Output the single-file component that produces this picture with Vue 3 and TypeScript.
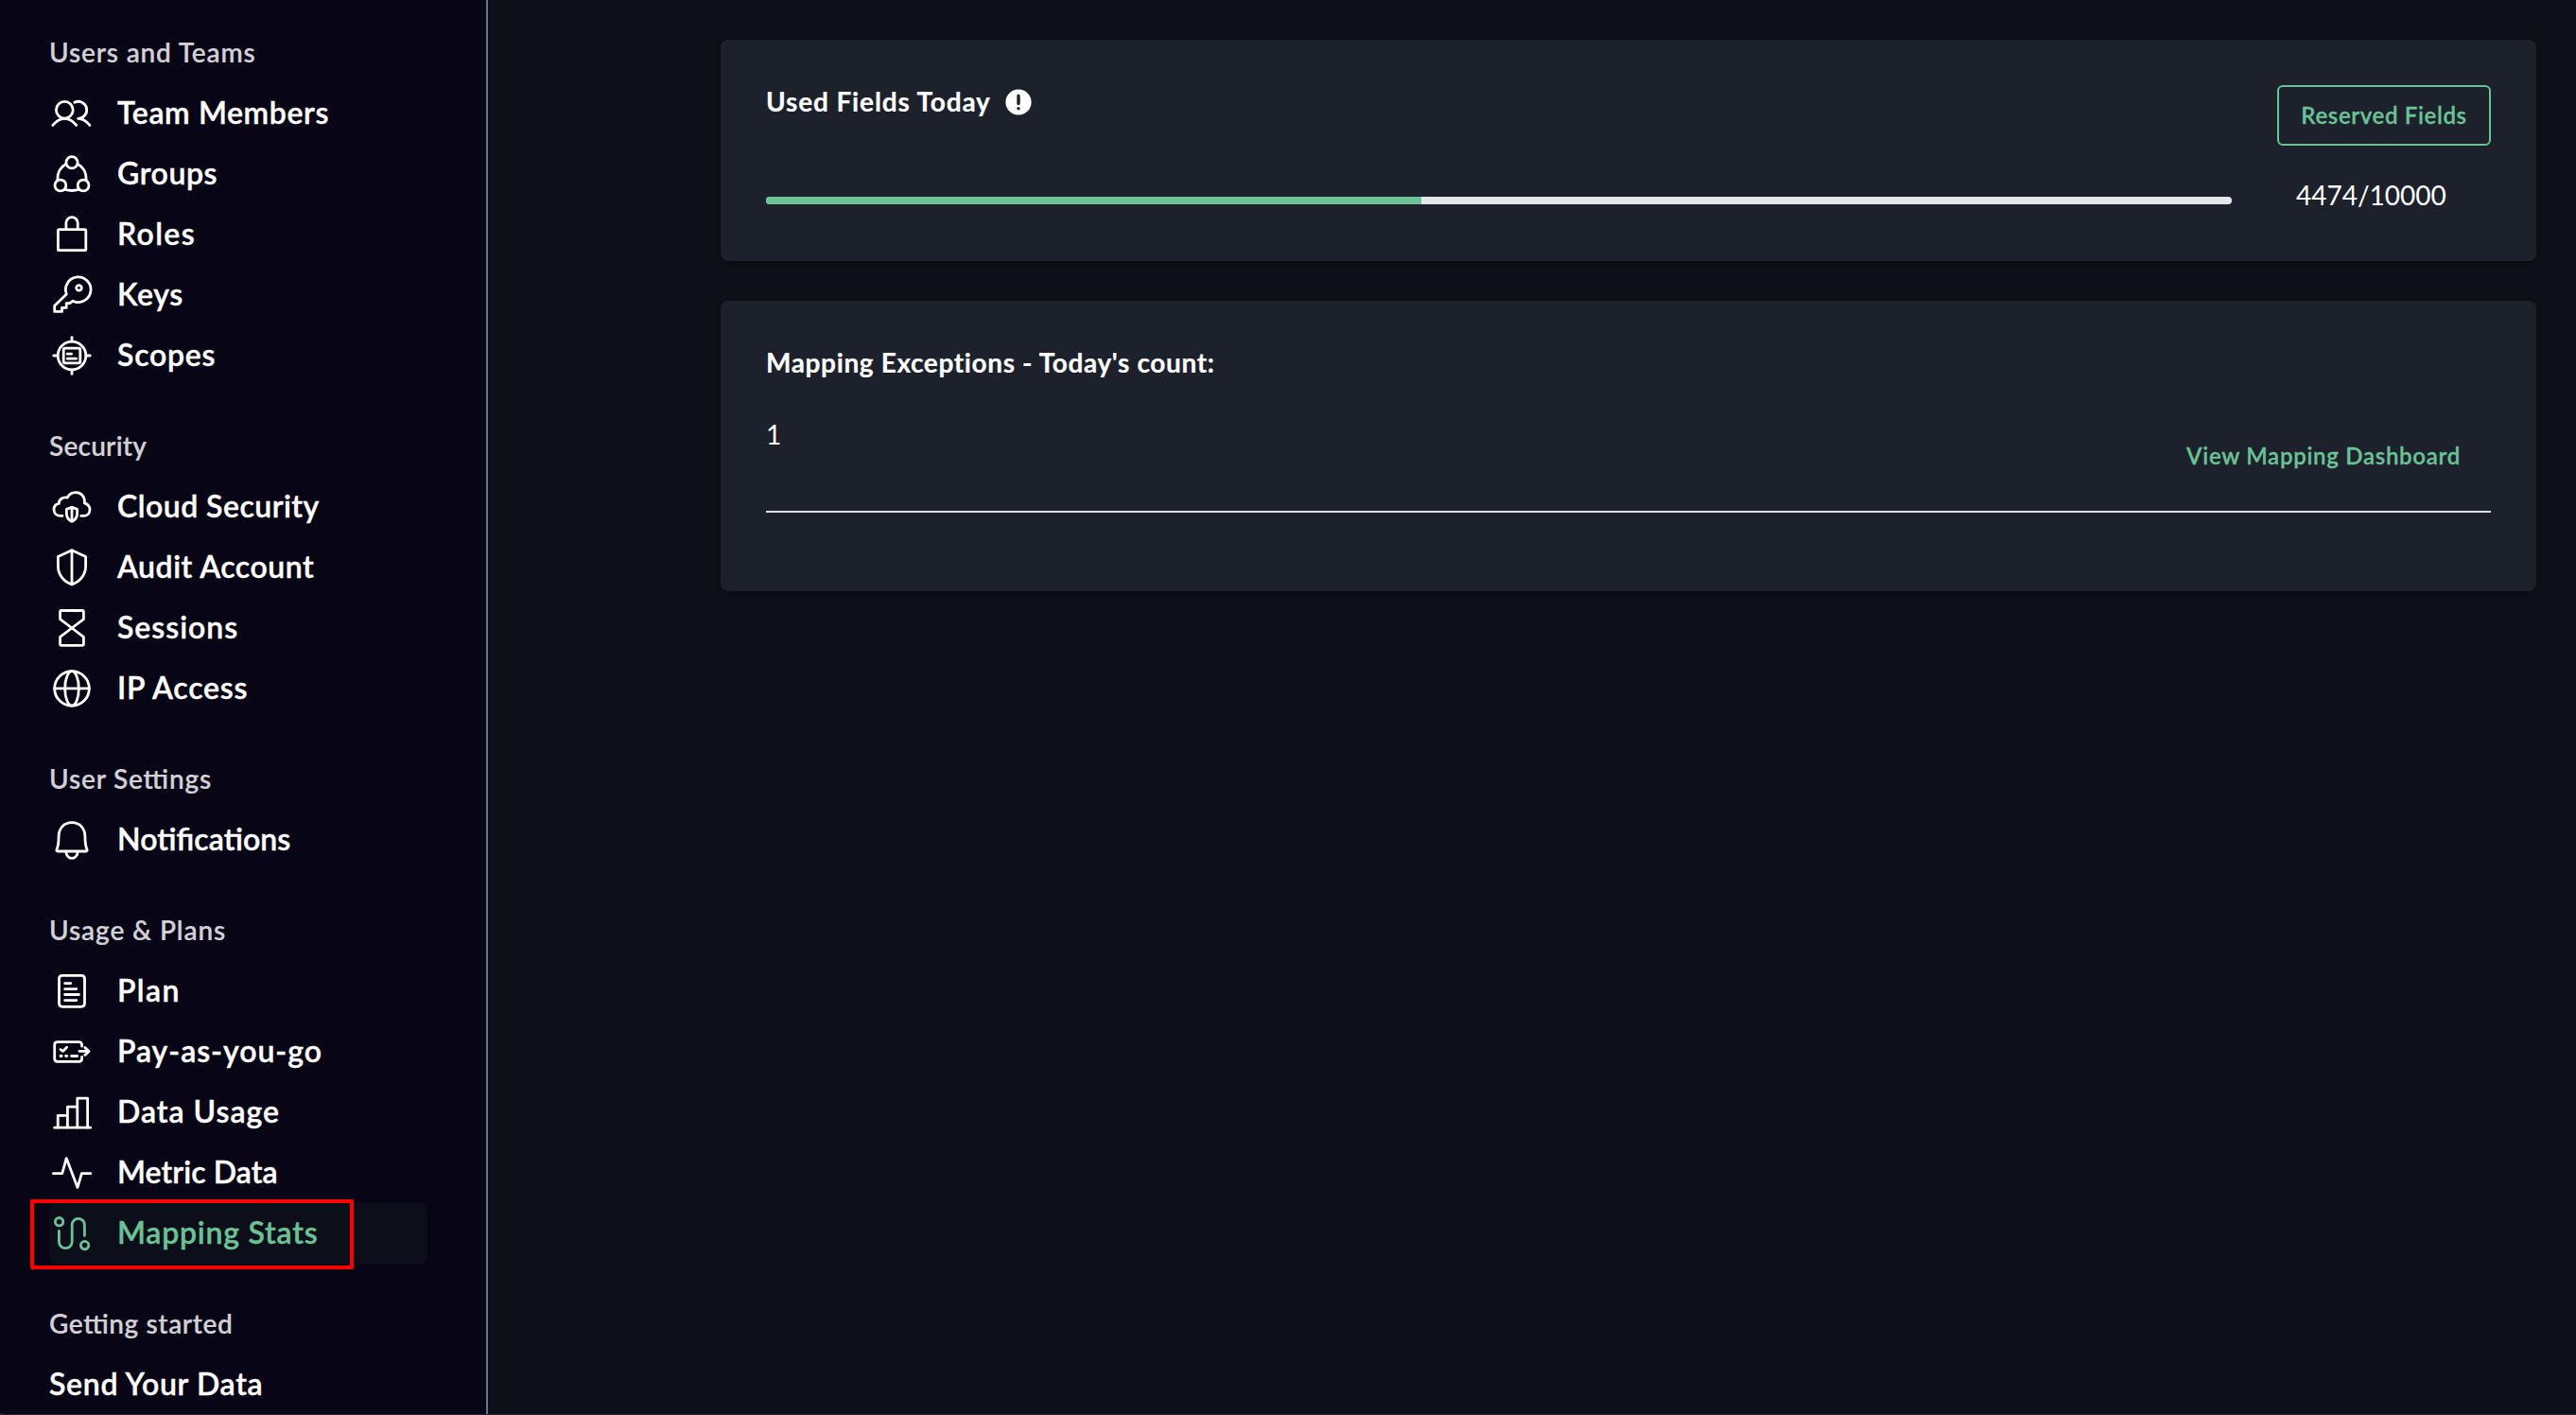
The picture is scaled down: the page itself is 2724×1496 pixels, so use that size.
<script setup lang="ts">
interface NavItem {
  label: string
  tracking: number
  icon?: string
  active?: boolean
}
interface NavGroup {
  title: string
  tracking: number
  items: NavItem[]
}

// Stroke paths on a 48×48 grid.
const icons: Record<string, string[]> = {
  team: [
    'M25.2 20.3a8.9 8.9 0 1 1-17.8 0a8.9 8.9 0 1 1 17.8 0Z',
    'M3.8 36.4Q9.4 29.4 16.3 29.3Q23.4 29.4 28.7 36.4',
    'M26.8 12.2A9 9 0 1 1 30.6 29.3Q37.6 29.6 42.9 36.4',
  ],
  groups: [
    'M30.1 11.8a6.1 6.1 0 1 1-12.2 0a6.1 6.1 0 1 1 12.2 0Z',
    'M17.8 36a5.9 5.9 0 1 1-11.8 0a5.9 5.9 0 1 1 11.8 0Z',
    'M42 36a5.9 5.9 0 1 1-11.8 0a5.9 5.9 0 1 1 11.8 0Z',
    'M17.8 13.5C11 17 8.6 23 8.8 30.2',
    'M30.2 13.5C37 17 39.4 23 39.2 30.2',
    'M16.6 40.4Q24 42.6 31.4 40.4',
  ],
  lock: [
    'M10.6 18.6H37.6Q38.8 18.6 38.8 19.8V39.4Q38.8 40.6 37.6 40.6H10.6Q9.4 40.6 9.4 39.4V19.8Q9.4 18.6 10.6 18.6Z',
    'M17.9 18.4V11.8a6.15 6.15 0 0 1 12.3 0V18.4',
  ],
  key: [
    'M18.3 22.9L5.7 35.2V41.4H13.5V37.3H18.2V32.6H21.8L25 30.2A13.3 13.3 0 1 0 18.3 22.9Z',
    'M34.3 16.4a2.8 2.8 0 1 1-5.6 0a2.8 2.8 0 1 1 5.6 0Z',
  ],
  scope: [
    'M38.8 24a14.8 14.8 0 1 1-29.6 0a14.8 14.8 0 1 1 29.6 0Z',
    'M24 4.6V9M24 39V43.4M4.8 24H9M39 24H43.2',
    'M17 16.2H31Q32.8 16.2 32.8 18V30Q32.8 31.8 31 31.8H17Q15.2 31.8 15.2 30V18Q15.2 16.2 17 16.2Z',
    'M19.2 22.2H23.6M19.2 27.2H28.6',
  ],
  cloud: [
    'M14 33.4H12.2C7.8 33.4 5 30.4 5 26.8C5 23.6 7 21 10.2 20.4C10.4 16 13.8 13.2 19.4 14C21 10.4 24.4 8.6 28.2 8.6C33.8 8.6 38 12.9 37.4 19.8C41 21 43 23.6 43 26.8C43 30.7 40.3 33.4 36.4 33.4H33.8',
    'M24 24.3L29.6 26.4V31C29.6 35.4 27 38 24 39.4C21 38 18.4 35.4 18.4 31V26.4ZM24 24.3V39.4',
  ],
  shield: [
    'M24 5.7L38.6 12.6V22.5C38.6 31.5 33 38.8 24 42C15 38.8 9.4 31.5 9.4 22.5V12.6ZM24 5.7V42',
  ],
  hourglass: [
    'M13 5.5H35Q36.4 5.5 36.4 6.9V14.6L24 24L11.6 14.6V6.9Q11.6 5.5 13 5.5Z',
    'M13 42.4H35Q36.4 42.4 36.4 41V33.3L24 24L11.6 33.3V41Q11.6 42.4 13 42.4Z',
  ],
  globe: [
    'M42.3 23.9a18.3 18.3 0 1 1-36.6 0a18.3 18.3 0 1 1 36.6 0Z',
    'M31.3 23.9a7.3 18.3 0 1 1-14.6 0a7.3 18.3 0 1 1 14.6 0Z',
    'M5.7 23.9H42.3',
  ],
  bell: [
    'M24 5.7C15.4 5.7 10.2 12 10.1 20C10 27.5 9.5 31 8 34.2Q7.4 36 9.2 36H38.8Q40.6 36 40 34.2C38.5 31 38 27.5 37.9 20C37.8 12 32.6 5.7 24 5.7Z',
    'M17.9 36.4a6.1 7 0 0 0 12.2 0',
  ],
  plan: [
    'M14 7.4H34Q37.5 7.4 37.5 10.9V36.8Q37.5 40.3 34 40.3H14Q10.5 40.3 10.5 36.8V10.9Q10.5 7.4 14 7.4Z',
    'M16.6 15.6H22.8M16.6 21.6H28.8M16.6 27.5H31.4M16.6 33.6H28.8',
  ],
  pay: [
    'M34.6 18.2V16.7Q34.6 13.7 31.6 13.7H8.7Q5.7 13.7 5.7 16.7V31.3Q5.7 34.3 8.7 34.3H31.6Q34.6 34.3 34.6 31.3V29.4',
    'M32 23.4H41.6M37.8 19.4L42 23.4L37.8 27.4',
    'M12 21.6L14.6 23.4L18.6 19.2',
    'M12 28.5H13.2M17.6 28.5H18.8M23.6 28.5H29.6',
  ],
  bars: [
    'M5.7 40.2H43.6',
    'M9.2 40V27.4H19.4M19.4 40V18.2H29.8M29.8 40V9.2H40.6V40',
  ],
  pulse: ['M4.4 24.7H13.8L18.2 8.6L30 39.4L34.4 24.7H43.8'],
  mapping: [
    'M14.8 11.7a4.2 4.2 0 1 1-8.4 0a4.2 4.2 0 1 1 8.4 0Z',
    'M41.8 36.6a4.2 4.2 0 1 1-8.4 0a4.2 4.2 0 1 1 8.4 0Z',
    'M10.4 21.4V32.8a6.9 6.9 0 0 0 13.8 0V15a6.6 6.6 0 0 1 13.2 0V26.4',
  ],
}

const groups: NavGroup[] = [
  {
    title: 'Users and Teams',
    tracking: 0.84,
    items: [
      { label: 'Team Members', icon: 'team', tracking: 0.62 },
      { label: 'Groups', icon: 'groups', tracking: 0.6 },
      { label: 'Roles', icon: 'lock', tracking: 1.35 },
      { label: 'Keys', icon: 'key', tracking: 0.6 },
      { label: 'Scopes', icon: 'scope', tracking: 0.75 },
    ],
  },
  {
    title: 'Security',
    tracking: 0.22,
    items: [
      { label: 'Cloud Security', icon: 'cloud', tracking: 0.47 },
      { label: 'Audit Account', icon: 'shield', tracking: 0.52 },
      { label: 'Sessions', icon: 'hourglass', tracking: 0.97 },
      { label: 'IP Access', icon: 'globe', tracking: 0.75 },
    ],
  },
  {
    title: 'User Settings',
    tracking: 0.82,
    items: [{ label: 'Notifications', icon: 'bell', tracking: 0.08 }],
  },
  {
    title: 'Usage & Plans',
    tracking: 0.9,
    items: [
      { label: 'Plan', icon: 'plan', tracking: 1.4 },
      { label: 'Pay-as-you-go', icon: 'pay', tracking: 0.96 },
      { label: 'Data Usage', icon: 'bars', tracking: 1 },
      { label: 'Metric Data', icon: 'pulse', tracking: 0.1 },
      { label: 'Mapping Stats', icon: 'mapping', tracking: 0.78, active: true },
    ],
  },
  {
    title: 'Getting started',
    tracking: 0.6,
    items: [{ label: 'Send Your Data', tracking: 0.68 }],
  },
]

const used = 4474
const limit = 10000
const exceptions = 1
</script>

<template>
  <div class="app">
    <nav class="sidebar">
      <section v-for="group in groups" :key="group.title" class="group">
        <h2 class="group-title" :style="{ letterSpacing: group.tracking + 'px' }">{{ group.title }}</h2>
        <a
          v-for="item in group.items"
          :key="item.label"
          class="item"
          :class="{ active: item.active }"
        >
          <svg v-if="item.icon" class="icon" viewBox="0 0 48 48">
            <path v-for="d in icons[item.icon]" :key="d" :d="d" />
          </svg>
          <span class="label" :style="{ letterSpacing: item.tracking + 'px' }">{{ item.label }}</span>
          <i v-if="item.active" class="marker"></i>
        </a>
      </section>
    </nav>

    <main class="content">
      <section class="card usage">
        <header class="card-head">
          <h3 class="card-title wide">Used Fields Today</h3>
          <svg class="info" viewBox="0 0 28 28">
            <circle cx="14" cy="14" r="13.6" />
            <path d="M14 7.2V15.6M14 20.6V20.7" />
          </svg>
          <button class="reserve" type="button">Reserved Fields</button>
        </header>
        <div class="meter-row">
          <div class="meter">
            <div class="meter-fill" :style="{ width: (used / limit) * 100 + '%' }"></div>
          </div>
          <span class="meter-count">{{ used }}/{{ limit }}</span>
        </div>
      </section>

      <section class="card exceptions">
        <h3 class="card-title">Mapping Exceptions - Today's count:</h3>
        <div class="exception-row">
          <span class="exception-count">{{ exceptions }}</span>
          <a class="dashboard-link">View Mapping Dashboard</a>
        </div>
      </section>
    </main>
  </div>
</template>

<style>
html,
body {
  margin: 0;
  overflow: hidden;
  background: #1b2944;
}
</style>

<style scoped>
.app {
  box-sizing: border-box;
  display: flex;
  width: 100vw;
  height: 1496px;
  overflow: hidden;
  background: #0d1017;
  border-bottom: 1px solid #25232d;
  border-bottom-left-radius: 8px 3px;
  color: #fff;
  font-family: Lato, 'Noto Sans', sans-serif;
  font-feature-settings: 'liga' 1;
}
.sidebar {
  box-sizing: border-box;
  flex: none;
  width: 516px;
  height: 1496px;
  padding: 24px 62px 0 52px;
  overflow: hidden;
  background: #080616;
  border-right: 2px solid #64748b;
}
.group {
  margin-bottom: 32px;
}
.group-title {
  height: 64px;
  margin: 0;
  color: #d2d1d6;
  font-size: 28px;
  font-weight: 600;
  line-height: 62px;
  -webkit-text-stroke: 0.2px currentColor;
}
.item {
  position: relative;
  display: flex;
  gap: 24px;
  height: 64px;
  border-radius: 8px;
  font-size: 32px;
  font-weight: 600;
  line-height: 62px;
  white-space: nowrap;
  -webkit-text-stroke: 0.4px currentColor;
}
.item.active {
  background: #0c0f19;
  color: #6bc295;
}
.icon {
  flex: none;
  width: 48px;
  height: 48px;
  margin-top: 8px;
  fill: none;
  stroke: currentColor;
  stroke-width: 2.8;
  stroke-linecap: round;
  stroke-linejoin: round;
}
.marker {
  position: absolute;
  top: -4px;
  left: -20px;
  box-sizing: border-box;
  width: 342px;
  height: 74px;
  border: 4px solid #ff0000;
  border-radius: 2px;
}
.content {
  flex: 1;
  padding: 42px 42px 0 246px;
}
.card {
  box-sizing: border-box;
  padding: 48px;
  background: #1c212c;
  border-radius: 8px;
  box-shadow: 0 2px 4px rgba(0, 0, 0, 0.3);
}
.usage {
  height: 234px;
  margin-bottom: 42px;
}
.exceptions {
  height: 307px;
}
.card-head {
  display: flex;
  align-items: flex-start;
  height: 64px;
}
.card-title {
  height: 33px;
  margin: 0;
  font-size: 28px;
  font-feature-settings: 'liga' 0;
  font-weight: 700;
  letter-spacing: 0.63px;
  line-height: 35px;
  -webkit-text-stroke: 0.2px currentColor;
}
.card-title.wide {
  letter-spacing: 0.86px;
}
.info {
  width: 28px;
  height: 28px;
  margin: 4px 0 0 15px;
}
.info circle {
  fill: #fff;
}
.info path {
  fill: none;
  stroke: #1c212c;
  stroke-width: 3.4;
  stroke-linecap: round;
}
.reserve {
  box-sizing: border-box;
  width: 226px;
  height: 64px;
  margin-left: auto;
  padding: 0 0 1px;
  background: transparent;
  border: 2px solid #6bc295;
  border-radius: 6px;
  color: #6bc295;
  font: inherit;
  font-size: 24px;
  font-weight: 600;
  letter-spacing: 0.64px;
  -webkit-text-stroke: 0.3px currentColor;
}
.meter-row {
  display: flex;
  gap: 68px;
  height: 40px;
  margin-top: 31px;
}
.meter {
  width: 1550px;
  height: 8px;
  margin-top: 23px;
  overflow: hidden;
  background: #e6e7ea;
  border-radius: 4px;
}
.meter-fill {
  height: 100%;
  background: #6bc295;
}
.meter-count,
.exception-count {
  font-size: 28px;
  line-height: 42px;
}
.exception-row {
  display: flex;
  justify-content: space-between;
  height: 102px;
  margin-top: 39px;
  border-bottom: 2px solid #e0e0e0;
}
.dashboard-link {
  margin: 12px 32px 0 0;
  color: #6bc295;
  font-size: 24px;
  font-weight: 600;
  letter-spacing: 0.72px;
  line-height: 64px;
  -webkit-text-stroke: 0.3px currentColor;
}
</style>
